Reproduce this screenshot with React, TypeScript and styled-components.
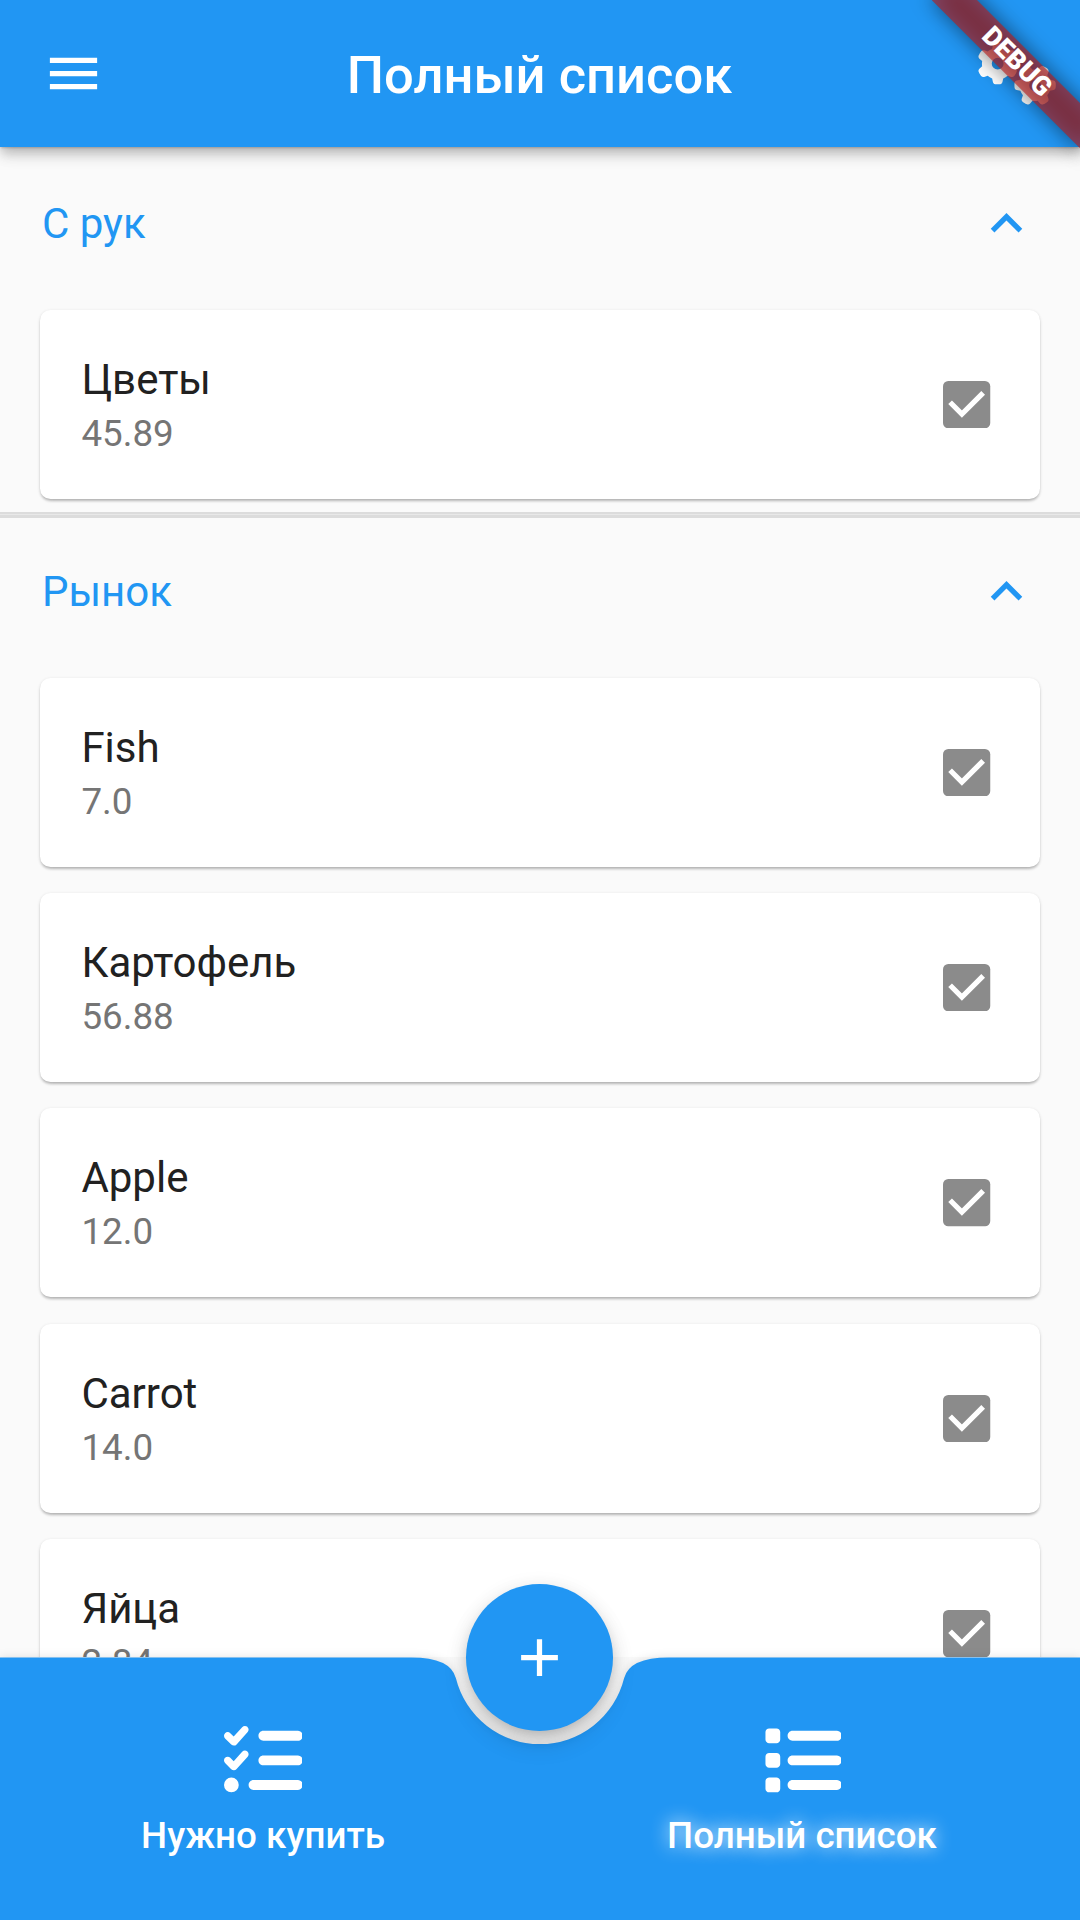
import React from "react";
import styled, { createGlobalStyle } from "styled-components";
import { MdMenu, MdExpandLess, MdAdd } from "react-icons/md";
import { FaGears, FaList, FaListCheck } from "react-icons/fa6";

const BLUE = "#2196f3";

const GlobalStyle = createGlobalStyle`
  * { box-sizing: border-box; }
  body { margin: 0; background: #fafafa; font-family: Roboto, "Noto Sans", sans-serif; }
`;

const Screen = styled.div`
  position: relative;
  display: flex;
  flex-direction: column;
  width: 1080px;
  height: 1920px;
  overflow: hidden;
  background: #fafafa;
`;

const AppBar = styled.header`
  position: relative;
  z-index: 1;
  display: grid;
  grid-template-columns: 147px 1fr 147px;
  align-items: center;
  flex: none;
  height: 147px;
  color: #fff;
  background: ${BLUE};
  box-shadow:
    0 2px 2px -1px rgba(0, 0, 0, 0.18),
    0 5.25px 10.5px -2.6px rgba(0, 0, 0, 0.16),
    0 9px 12px 0 rgba(0, 0, 0, 0.12),
    0 2.6px 22px 0 rgba(0, 0, 0, 0.08);
`;

const IconButton = styled.div<{ $offset?: number }>`
  display: flex;
  padding-left: ${(p) => p.$offset ?? 42}px;

  svg { flex: none; }
`;

const Title = styled.h1`
  margin: 2px 1px 0 0;
  text-align: center;
  font-size: 52.5px;
  font-weight: 500;
  line-height: 62px;
`;

const Body = styled.main`
  flex: 1;
  min-height: 0;
  overflow: hidden;
`;

const Section = styled.section`
  padding-top: 2.625px;
`;

const SectionHeader = styled.div`
  display: flex;
  align-items: center;
  justify-content: space-between;
  height: 147px;
  padding: 0 42px;
  color: ${BLUE};
  font-size: 42px;
`;

const Divider = styled.div`
  height: 6px;
  margin-bottom: -2.65px;
  border: solid #dcdcdc;
  border-width: 2px 0 3px;
  background: #e8e8e8;
`;

const CardSlot = styled.div`
  display: flow-root;
  height: 215.25px;
`;

const Card = styled.article`
  display: flex;
  align-items: center;
  justify-content: space-between;
  height: 189px;
  margin: 13.125px 40px;
  padding: 0 49.5px 0 41.4px;
  border-radius: 10.5px;
  background: #fff;
  box-shadow:
    0 3px 3px -1px rgba(0, 0, 0, 0.2),
    0 1px 3px 0 rgba(0, 0, 0, 0.12),
    0 1px 5px 0 rgba(0, 0, 0, 0.04);
`;

const ItemName = styled.div`
  color: #212121;
  font-size: 42px;
  line-height: 50px;
`;

const ItemPrice = styled.div`
  margin: 7px 0 -2px;
  color: #757575;
  font-size: 36.75px;
  line-height: 44px;
`;

const BottomBar = styled.nav`
  position: relative;
  flex: none;
  height: 263px;
`;

const BarShape = styled.svg`
  position: absolute;
  inset: 0;
  overflow: visible;
  filter: drop-shadow(0 0 5px rgba(0, 0, 0, 0.12));
`;

const Tabs = styled.div`
  position: relative;
  display: flex;
  justify-content: space-around;
  padding: 64px 2px 0 0;
  color: #fff;
`;

const Tab = styled.div<{ $active?: boolean }>`
  display: flex;
  flex-direction: column;
  align-items: center;
  gap: 14px;
  font-size: 36.75px;
  font-weight: 500;
  line-height: 44px;
  text-shadow: ${(p) => (p.$active ? "0 0 18px #fff" : "none")};
`;

const Fab = styled.div`
  position: absolute;
  top: -73px;
  left: 466px;
  display: flex;
  align-items: center;
  justify-content: center;
  width: 147px;
  height: 147px;
  border-radius: 50%;
  color: #fff;
  background: ${BLUE};
  box-shadow:
    0 8px 13px -3px rgba(0, 0, 0, 0.14),
    0 13px 24px 0 rgba(0, 0, 0, 0.12),
    0 3px 20px 0 rgba(0, 0, 0, 0.08);
`;

const Banner = styled.div`
  position: absolute;
  z-index: 2;
  top: 72.5px;
  left: 975px;
  width: 210px;
  height: 31.5px;
  padding-right: 2.6px;
  transform: rotate(45deg);
  transform-origin: 105px -72.5px;
  color: #fff;
  text-align: center;
  font-size: 26.8px;
  font-weight: 900;
  line-height: 31px;

  &::before,
  &::after {
    content: "";
    position: absolute;
    inset: 0;
    z-index: -1;
  }
  &::before {
    background: rgba(0, 0, 0, 0.5);
    filter: blur(10.4px);
  }
  &::after {
    background: rgba(183, 28, 28, 0.627);
  }
`;

const CheckBox = () => (
  <svg width="47.25" height="47.25" viewBox="0 0 18 18">
    <rect width="18" height="18" rx="2" fill="#8b8b8b" />
    <path d="M2.7 8.1 7.2 12.6 15.3 4.5" fill="none" stroke="#fff" strokeWidth="2" />
  </svg>
);

type Item = { name: string; price: string };

const sections: { title: string; items: Item[] }[] = [
  { title: "С рук", items: [{ name: "Цветы", price: "45.89" }] },
  {
    title: "Рынок",
    items: [
      { name: "Fish", price: "7.0" },
      { name: "Картофель", price: "56.88" },
      { name: "Apple", price: "12.0" },
      { name: "Carrot", price: "14.0" },
      { name: "Яйца", price: "2.84" },
    ],
  },
];

// Bar outline with a circular notch that leaves a margin around the floating button.
const barPath =
  "M0 0H411.4Q450.75 0 455.92 20.84A86.625 86.625 0 0 0 624.08 20.84Q629.25 0 668.6 0H1080V263H0Z";

export default function App() {
  return (
    <Screen>
      <GlobalStyle />
      <AppBar>
        <IconButton><MdMenu size={63} /></IconButton>
        <Title>Полный список</Title>
        <IconButton $offset={44.6}>
          <FaGears style={{ width: 78.75, height: 63 }} />
        </IconButton>
      </AppBar>
      <Body>
        {sections.map((section, i) => (
          <React.Fragment key={section.title}>
            {i > 0 && <Divider />}
            <Section>
              <SectionHeader>
                <span>{section.title}</span>
                <MdExpandLess size={63} />
              </SectionHeader>
              {section.items.map((item) => (
                <CardSlot key={item.name}>
                  <Card>
                    <div>
                      <ItemName>{item.name}</ItemName>
                      <ItemPrice>{item.price}</ItemPrice>
                    </div>
                    <CheckBox />
                  </Card>
                </CardSlot>
              ))}
            </Section>
          </React.Fragment>
        ))}
      </Body>
      <BottomBar>
        <BarShape width="1080" height="263" viewBox="0 0 1080 263">
          <path d={barPath} fill={BLUE} transform="translate(0 0.5)" />
        </BarShape>
        <Tabs>
          <Tab>
            <FaListCheck size={78.75} />
            <span>Нужно купить</span>
          </Tab>
          <Tab $active>
            <FaList size={78.75} />
            <span>Полный список</span>
          </Tab>
        </Tabs>
        <Fab><MdAdd size={63} /></Fab>
      </BottomBar>
      <Banner>DEBUG</Banner>
    </Screen>
  );
}
